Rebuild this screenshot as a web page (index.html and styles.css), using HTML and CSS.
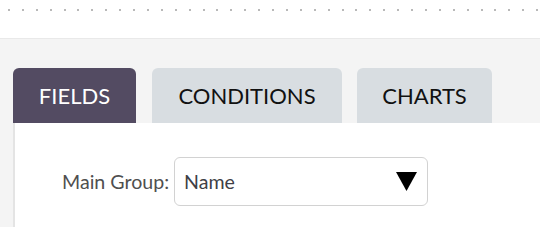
FILE: index.html
```html
<!DOCTYPE html>
<html>
<head>
<meta charset="utf-8">
<link rel="stylesheet" href="styles.css">
</head>
<body>
<div class="topbar"><div class="dots"></div></div>
<div class="area">
  <div class="tabs">
    <div class="tab active">FIELDS</div>
    <div class="tab">CONDITIONS</div>
    <div class="tab charts">CHARTS</div>
  </div>
  <div class="panel">
    <div class="row">
      <span class="label">Main Group:</span>
      <div class="select">
        <span class="value">Name</span>
        <svg class="arrow" width="21" height="19" viewBox="0 0 21 19"><polygon points="0,0 21,0 10.5,19" fill="#000"/></svg>
      </div>
    </div>
  </div>
</div>
</body>
</html>
```
FILE: styles.css
```css
html, body {
  margin: 0;
  padding: 0;
  background: #fff;
  font-family: Lato, "Liberation Sans", sans-serif;
}
.topbar {
  height: 38px;
  box-sizing: border-box;
  padding-top: 9px;
  padding-left: 8px;
  background: #fff;
}
.dots {
  height: 2px;
  background: repeating-linear-gradient(to right, #b9b9b9 0 2px, transparent 2px 13.9px);
}
.area {
  border-top: 1px solid #e9e9e9;
  background: #f4f4f4;
  height: 189px;
  box-sizing: border-box;
  padding-top: 29px;
  padding-left: 13px;
  display: flex;
  flex-direction: column;
}
.tabs {
  display: flex;
  gap: 16px;
}
.tab {
  height: 55px;
  box-sizing: border-box;
  padding: 0 26px;
  border-radius: 6px 6px 0 0;
  background: #d8dde1;
  color: #111;
  font-size: 22px;
  display: flex;
  align-items: center;
  justify-content: center;
}
.tab.active {
  background: #534b62;
  color: #fff;
  width: 123px;
}
.tab:nth-child(2) { width: 190px; }
.tab.charts { width: 135px; margin-left: -1px; }
.panel {
  flex: 1;
  background: #fff;
  border-left: 2px solid #e4e4e4;
}
.row {
  display: flex;
  align-items: center;
  padding-top: 34px;
  padding-left: 47px;
}
.label {
  font-size: 19.6px;
  color: #4f4f4f;
  margin-right: 5px;
}
.select {
  width: 254px;
  height: 49px;
  box-sizing: border-box;
  border: 1px solid #d2d2d2;
  border-radius: 6px;
  display: flex;
  align-items: center;
  justify-content: space-between;
  padding-left: 9px;
  padding-right: 10px;
}
.value {
  font-size: 19.6px;
  color: #3f3f46;
}
.arrow {
  display: block;
}
```
